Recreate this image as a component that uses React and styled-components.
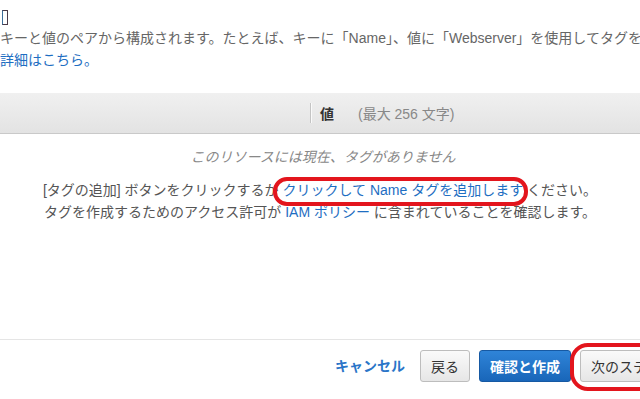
import styled, { createGlobalStyle } from "styled-components";

const GlobalStyle = createGlobalStyle`
  html, body {
    margin: 0;
    padding: 0;
    background: #fff;
    overflow: hidden;
  }
  body {
    font-family: "Liberation Sans", "Noto Sans CJK JP", sans-serif;
    font-size: 14px;
    color: #555;
  }
`;

const Page = styled.div`
  width: 640px;
  height: 399px;
  display: flex;
  flex-direction: column;
  overflow: hidden;
  white-space: nowrap;
`;

const TitleMark = styled.span`
  display: block;
  width: 4px;
  height: 13px;
  margin: 10px 0 0 2px;
  border: 1.5px solid #4a3a48;
  border-left-color: #3d6f9a;
`;

const Intro = styled.p`
  margin: ${(p) => (p.$first ? "2px" : "0")} 0 0 0;
  line-height: 22px;
  color: #666;
`;

const Link = styled.a`
  color: #1e6ec2;
  text-decoration: none;
  cursor: pointer;
`;

const TableHead = styled.div`
  margin-top: 22px;
  height: 40px;
  display: flex;
  align-items: center;
  background: linear-gradient(#f0f0f0, #e3e3e3);
  border-bottom: 1px solid #c9c9c9;
`;

const KeyCell = styled.div`
  width: 310px;
`;

const Divider = styled.div`
  width: 1px;
  height: 20px;
  background: #c4c4c4;
  box-shadow: 1px 0 0 #fafafa;
`;

const ValueCell = styled.div`
  padding-left: 9px;
  display: flex;
  align-items: center;
`;

const HeadLabel = styled.span`
  font-weight: bold;
  color: #333;
`;

const HeadHint = styled.span`
  margin-left: 24px;
  color: #888;
`;

const Empty = styled.p`
  margin: 12px 0 0 0;
  line-height: 22px;
  text-align: center;
  font-style: italic;
  color: #888;
  padding-left: 6px;
`;

const Help = styled.p`
  margin: 11px 0 0 0;
  line-height: 22px;
  text-align: center;
  color: #555;
`;

const Marked = styled(Link)`
  position: relative;
  &::after {
    content: "";
    position: absolute;
    left: -9px;
    right: -5px;
    top: -5px;
    bottom: -8px;
    border: 4px solid #e3151d;
    border-radius: 14px;
  }
`;

const Footer = styled.div`
  margin-top: auto;
  height: 49px;
  border-top: 1px solid #e5e5e5;
  padding: 10px 0 0 335px;
  display: flex;
  align-items: flex-start;
`;

const Cancel = styled(Link)`
  font-weight: bold;
  line-height: 32px;
  margin-right: 15px;
  color: #2a75c8;
`;

const Button = styled.button`
  position: relative;
  flex-shrink: 0;
  height: 32px;
  padding: 0 10px;
  margin-right: 9px;
  font-family: inherit;
  font-size: 14px;
  border-radius: 3px;
  cursor: pointer;
  color: ${(p) => (p.$primary ? "#fff" : "#333")};
  font-weight: ${(p) => (p.$primary ? "bold" : "normal")};
  border: 1px solid ${(p) => (p.$primary ? "#1659a3" : "#bdbdbd")};
  background: ${(p) =>
    p.$primary
      ? "linear-gradient(#2f84d8, #1966b9)"
      : "linear-gradient(#fafafa, #e6e6e6)"};

  ${(p) =>
    p.$marked &&
    `
    &::after {
      content: "";
      position: absolute;
      left: -11px;
      right: -24px;
      top: -8px;
      bottom: -10px;
      border: 4px solid #e3151d;
      border-radius: 18px;
    }
  `}
`;

export default function App() {
  return (
    <>
      <GlobalStyle />
      <Page>
        <TitleMark />
        <Intro $first>
          キーと値のペアから構成されます。たとえば、キーに「Name」、値に「Webserver」を使用してタグを作成できます。
        </Intro>
        <Intro>
          <Link>詳細はこちら。</Link>
        </Intro>
        <TableHead>
          <KeyCell />
          <Divider />
          <ValueCell>
            <HeadLabel>値</HeadLabel>
            <HeadHint>(最大 256 文字)</HeadHint>
          </ValueCell>
        </TableHead>
        <Empty>このリソースには現在、タグがありません</Empty>
        <Help>
          [タグの追加] ボタンをクリックするか <Marked>クリックして Name タグを追加します</Marked> ください。
          <br />
          タグを作成するためのアクセス許可が <Link>IAM ポリシー</Link> に含まれていることを確認します。
        </Help>
        <Footer>
          <Cancel>キャンセル</Cancel>
          <Button>戻る</Button>
          <Button $primary>確認と作成</Button>
          <Button $marked>次のステップ: タグの追加</Button>
        </Footer>
      </Page>
    </>
  );
}
